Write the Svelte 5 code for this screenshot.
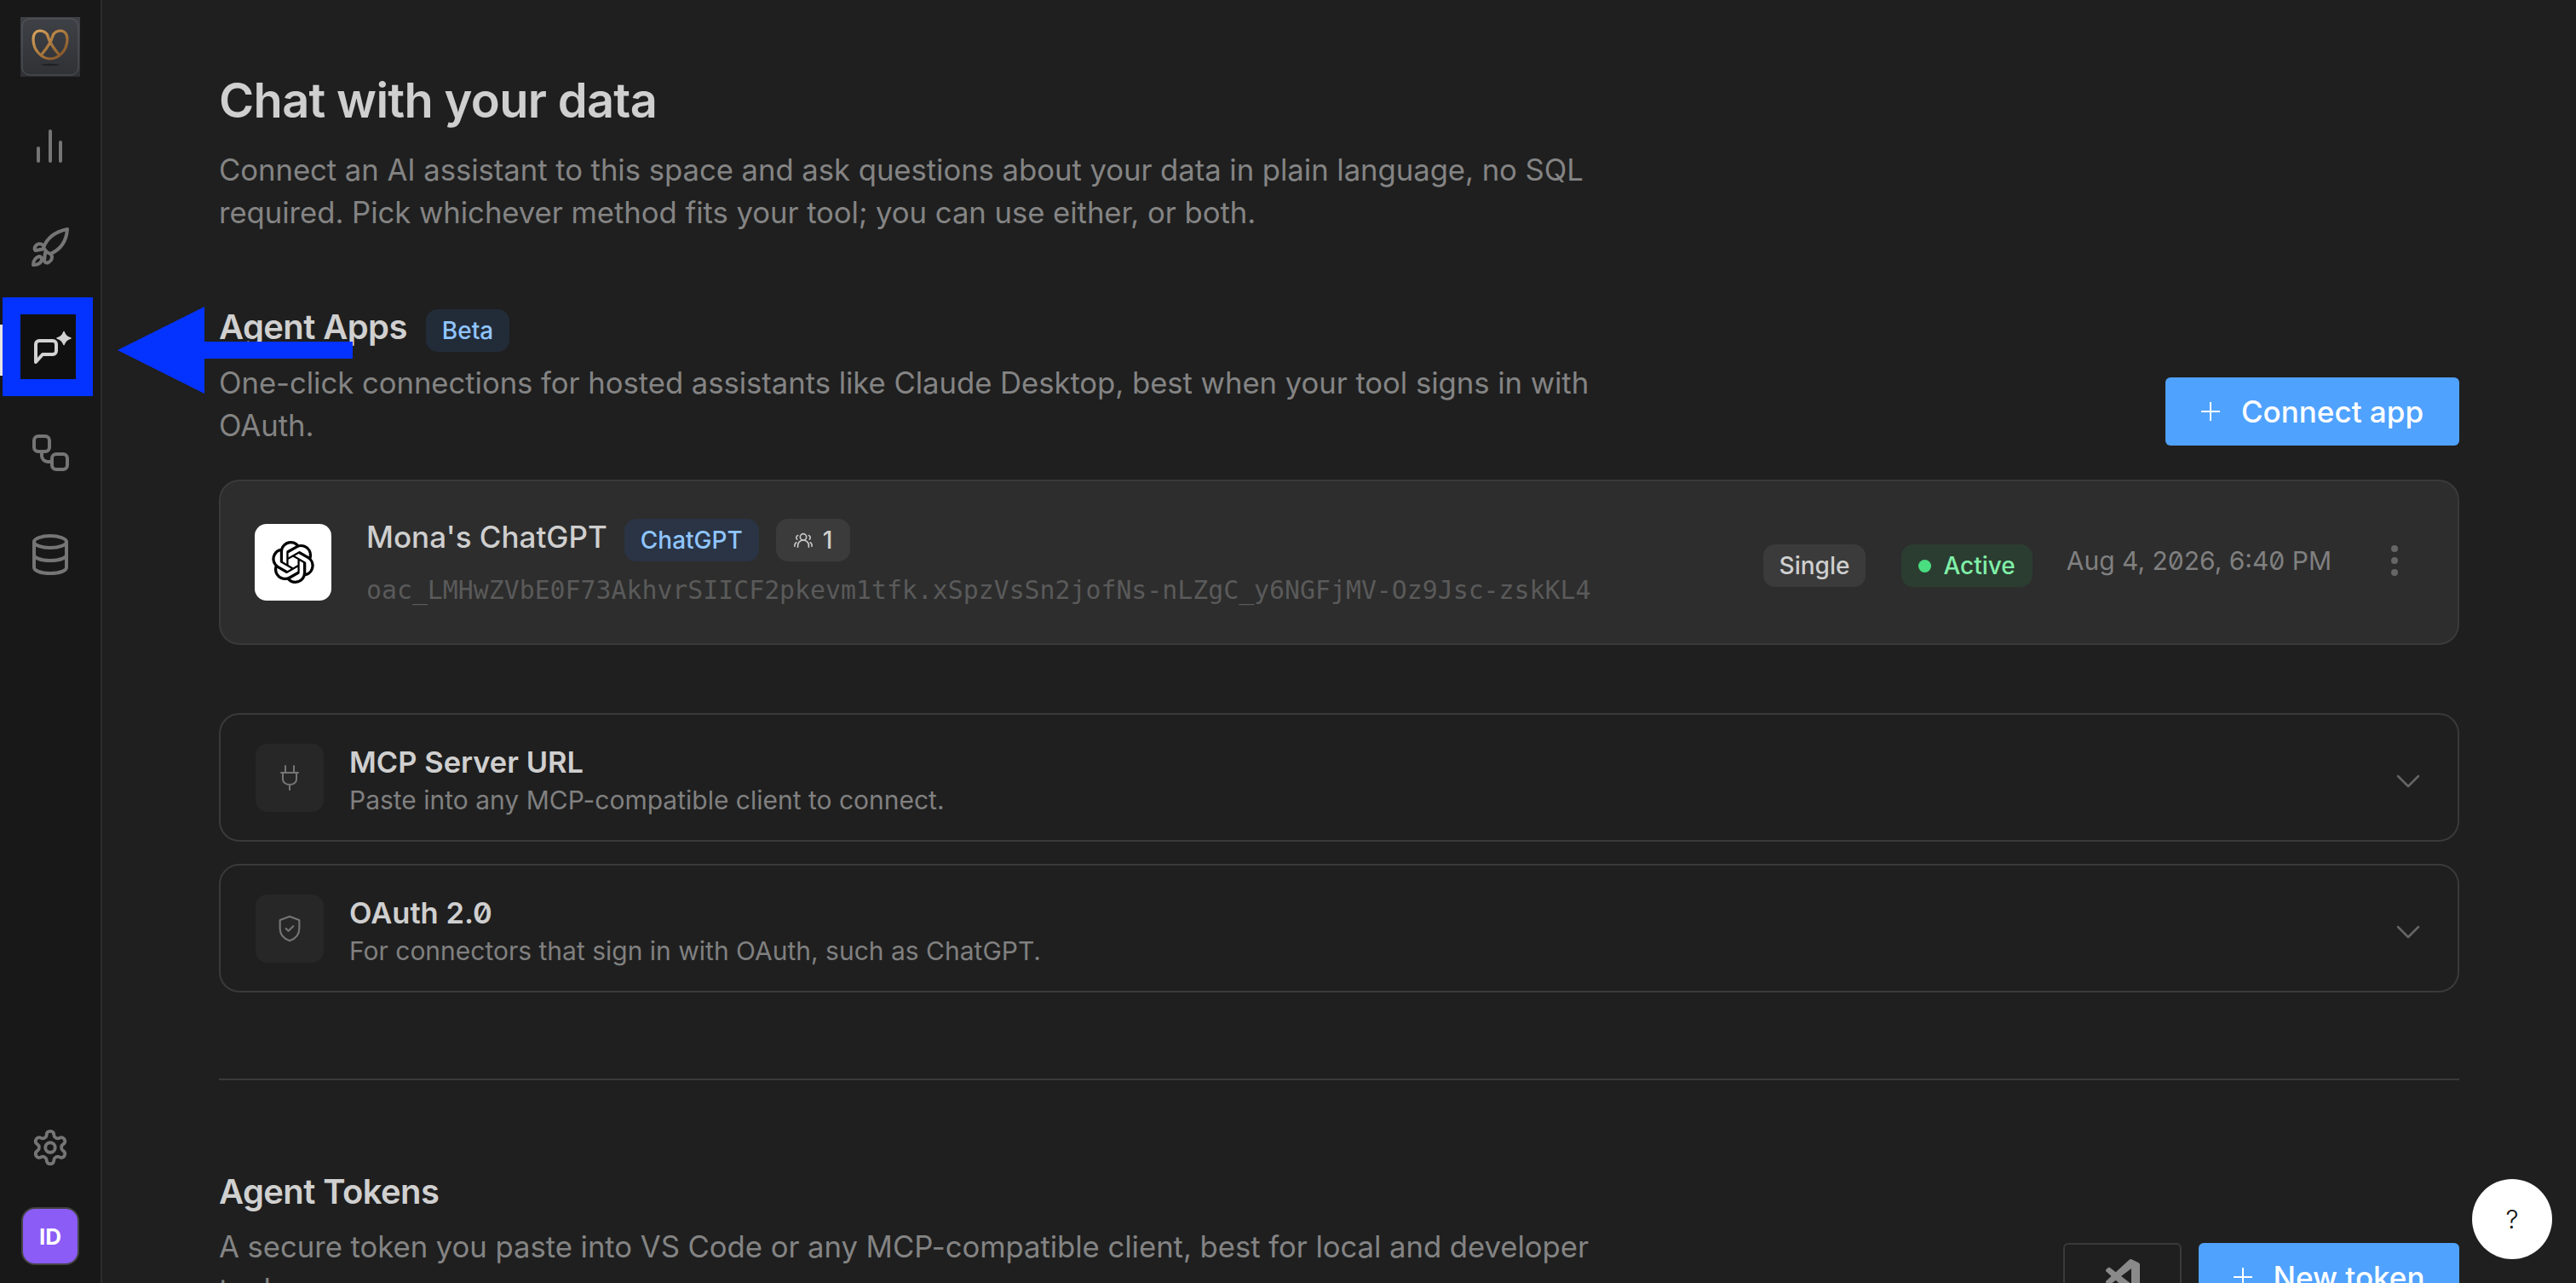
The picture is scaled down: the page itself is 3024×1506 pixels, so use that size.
<script>
  const connectors = [
    { title: 'MCP Server URL', sub: 'Paste into any MCP-compatible client to connect.', icon: 'plug' },
    { title: 'OAuth 2.0', sub: 'For connectors that sign in with OAuth, such as ChatGPT.', icon: 'shield' }
  ];
  const openai = 'M22.2819 9.8211a5.9847 5.9847 0 0 0-.5157-4.9108 6.0462 6.0462 0 0 0-6.5098-2.9A6.0651 6.0651 0 0 0 4.9807 4.1818a5.9847 5.9847 0 0 0-3.9977 2.9 6.0462 6.0462 0 0 0 .7427 7.0966 5.98 5.98 0 0 0 .511 4.9107 6.051 6.051 0 0 0 6.5146 2.9001A5.9847 5.9847 0 0 0 13.2599 24a6.0557 6.0557 0 0 0 5.7718-4.2058 5.9894 5.9894 0 0 0 3.9977-2.9001 6.0557 6.0557 0 0 0-.7475-7.0729zm-9.022 12.6081a4.4755 4.4755 0 0 1-2.8764-1.0408l.1419-.0804 4.7783-2.7582a.7948.7948 0 0 0 .3927-.6813v-6.7369l2.02 1.1686a.071.071 0 0 1 .038.052v5.5826a4.504 4.504 0 0 1-4.4945 4.4944zm-9.6607-4.1254a4.4708 4.4708 0 0 1-.5346-3.0137l.142.0852 4.783 2.7582a.7712.7712 0 0 0 .7806 0l5.8428-3.3685v2.3324a.0804.0804 0 0 1-.0332.0615L9.74 19.9502a4.4992 4.4992 0 0 1-6.1408-1.6464zM2.3408 7.8956a4.485 4.485 0 0 1 2.3655-1.9728V11.6a.7664.7664 0 0 0 .3879.6765l5.8144 3.3543-2.0201 1.1685a.0757.0757 0 0 1-.071 0l-4.8303-2.7865A4.504 4.504 0 0 1 2.3408 7.872zm16.5963 3.8558L13.1038 8.364 15.1192 7.2a.0757.0757 0 0 1 .071 0l4.8303 2.7913a4.4944 4.4944 0 0 1-.6765 8.1042v-5.6772a.79.79 0 0 0-.407-.667zm2.0107-3.0231l-.142-.0852-4.7735-2.7818a.7759.7759 0 0 0-.7854 0L9.409 9.2297V6.8974a.0662.0662 0 0 1 .0284-.0615l4.8303-2.7866a4.4992 4.4992 0 0 1 6.6802 4.66zM8.3065 12.863l-2.02-1.1638a.0804.0804 0 0 1-.038-.0567V6.0742a4.4992 4.4992 0 0 1 7.3757-3.4537l-.142.0805L8.704 5.459a.7948.7948 0 0 0-.3927.6813zm1.0976-2.3654l2.602-1.4998 2.6069 1.4998v2.9994l-2.5974 1.4997-2.6067-1.4997Z';
</script>

<div class="shell">
  <aside class="sidebar">
    <div class="logo">
      <svg viewBox="0 0 70 70" width="70" height="70">
        <defs>
          <linearGradient id="tile" x1="0" y1="0" x2="0" y2="1">
            <stop offset="0" stop-color="#3e4146" />
            <stop offset="1" stop-color="#2f3135" />
          </linearGradient>
          <linearGradient id="gold" x1="0" y1="0" x2="1" y2="1">
            <stop offset="0" stop-color="#d9a45c" />
            <stop offset="1" stop-color="#7c4e22" />
          </linearGradient>
        </defs>
        <rect width="70" height="70" fill="url(#tile)" />
        <rect x="2" y="2" width="66" height="66" rx="9" fill="none" stroke="#6c6e72" stroke-width="0.6" />
        <path d="M24 45C30 38 36 30 38 22C40 15 55 12 55 26C55 40 44 49 35 49C26 49 15 40 15 26C15 12 30 15 32 22C34 30 40 38 46 45" fill="none" stroke="url(#gold)" stroke-width="3.2" stroke-linecap="round" />
        <ellipse cx="35" cy="56" rx="11" ry="1.2" fill="#1f2023" />
      </svg>
    </div>

    <nav class="nav">
      <a class="nav-item" href="#charts" aria-label="Charts">
        <svg viewBox="0 0 40 40" width="40" height="40" class="ico"><path d="M6 23v15M20 3v35M32 16v22" stroke-width="4" /></svg>
      </a>
      <a class="nav-item" href="#launch" aria-label="Launch">
        <svg viewBox="0 0 48 48" width="48" height="48" class="ico">
          <path d="M20 29l-4-5C20 12 30 5 44 2c-1 14-8 24-20 29z" stroke-width="4" />
          <path d="M16 21c-4-3-8-2-10 2-1 2 0 4 1 4l10-2M25 31c2 4 1 8-3 10-3 1-5 0-5-2l1-9M11 34c-4 1-7 5-7 10 5 0 9-2 10-6 0-3-1-4-3-4z" stroke-width="4" />
        </svg>
      </a>
      <a class="nav-item active" href="#chat" aria-label="Chat">
        <svg viewBox="0 0 44 40" width="44" height="40" class="ico chat">
          <path d="M9 9h16a4 4 0 0 1 4 4v8a4 4 0 0 1-4 4H13l-8 9V13a4 4 0 0 1 4-4z" stroke-width="4" />
          <path d="M38-1.500q2 6 8 7.500q-6 1.500-8 7.500q-2-6-8-7.500q6-1.500 8-7.500z" class="solid" stroke-width="1.500" />
        </svg>
      </a>
      <a class="nav-item" href="#flows" aria-label="Flows">
        <svg viewBox="0 0 44 44" width="44" height="44" class="ico">
          <rect x="3" y="3" width="18" height="18" rx="5" stroke-width="4" />
          <rect x="24" y="24" width="18" height="18" rx="5" stroke-width="4" />
          <path d="M12 21v5a7 7 0 0 0 7 7h5" stroke-width="4" />
        </svg>
      </a>
      <a class="nav-item" href="#data" aria-label="Data">
        <svg viewBox="0 0 44 48" width="44" height="48" class="ico">
          <ellipse cx="22" cy="9" rx="19" ry="7" stroke-width="4" />
          <path d="M3 9v30c0 4 8 7 19 7s19-3 19-7V9M3 24c0 4 8 7 19 7s19-3 19-7" stroke-width="4" />
        </svg>
      </a>
    </nav>

    <div class="side-bottom">
      <svg viewBox="0 0 24 24" width="46" height="46" class="ico gear">
        <path d="M12.22 2h-.44a2 2 0 0 0-2 2v.18a2 2 0 0 1-1 1.73l-.43.25a2 2 0 0 1-2 0l-.15-.08a2 2 0 0 0-2.73.73l-.22.38a2 2 0 0 0 .73 2.73l.15.1a2 2 0 0 1 1 1.72v.51a2 2 0 0 1-1 1.74l-.15.09a2 2 0 0 0-.73 2.73l.22.38a2 2 0 0 0 2.73.73l.15-.08a2 2 0 0 1 2 0l.43.25a2 2 0 0 1 1 1.73V20a2 2 0 0 0 2 2h.44a2 2 0 0 0 2-2v-.18a2 2 0 0 1 1-1.73l.43-.25a2 2 0 0 1 2 0l.15.08a2 2 0 0 0 2.73-.73l.22-.39a2 2 0 0 0-.73-2.73l-.15-.08a2 2 0 0 1-1-1.74v-.5a2 2 0 0 1 1-1.74l.15-.09a2 2 0 0 0 .73-2.73l-.22-.38a2 2 0 0 0-2.73-.73l-.15.08a2 2 0 0 1-2 0l-.43-.25a2 2 0 0 1-1-1.73V4a2 2 0 0 0-2-2z" stroke-width="2" />
        <circle cx="12" cy="12" r="3" stroke-width="2" />
      </svg>
      <div class="avatar">ID</div>
    </div>
  </aside>

  <main class="main">
    <h1>Chat with your data</h1>
    <p class="desc intro">Connect an AI assistant to this space and ask questions about your data in plain language, no SQL required. Pick whichever method fits your tool; you can use either, or both.</p>

    <section class="head apps-head">
      <div>
        <div class="head-title">
          <h2>Agent Apps</h2>
          <span class="chip blue beta">Beta</span>
        </div>
        <p class="desc">One-click connections for hosted assistants like Claude Desktop, best when your tool signs in with OAuth.</p>
      </div>
      <button class="btn connect">
        <svg class="plus" viewBox="0 0 22 22" width="22" height="22"><path d="M11 0v22M0 11h22" /></svg>
        Connect app
      </button>
    </section>

    <div class="app-card">
      <div class="app-icon">
        <svg viewBox="0 0 24 24" width="50" height="50"><path d={openai} fill="#000" /></svg>
      </div>
      <div class="app-info">
        <div class="app-line">
          <span class="app-name">Mona's ChatGPT</span>
          <span class="chip blue">ChatGPT</span>
          <span class="chip gray users">
            <svg viewBox="0 0 24 24" width="22" height="22" fill="none" stroke="#c8c8c8" stroke-width="1.8" stroke-linecap="round">
              <circle cx="12" cy="8" r="4" />
              <path d="M5 21v-2a7 7 0 0 1 14 0v2M4 11a3 3 0 0 1 1-5M20 11a3 3 0 0 0-1-5M1 20v-2a5 5 0 0 1 2-3M23 20v-2a5 5 0 0 0-2-3" />
            </svg>
            1
          </span>
        </div>
        <code class="token">oac_LMHwZVbE0F73AkhvrSIICF2pkevm1tfk.xSpzVsSn2jofNs-nLZgC_y6NGFjMV-Oz9Jsc-zskKL4</code>
      </div>
      <div class="app-meta">
        <span class="chip gray single">Single</span>
        <span class="chip green"><i class="dot"></i>Active</span>
        <span class="date">Aug 4, 2026, 6:40 PM</span>
        <span class="kebab"><i></i><i></i><i></i></span>
      </div>
    </div>

    <div class="connectors">
      {#each connectors as c}
        <div class="connector">
          <div class="connector-icon">
            {#if c.icon === 'plug'}
              <svg viewBox="0 0 26 30" width="26" height="30" class="ico">
                <path d="M8 1v8M18 1v8M3 9h20M5 9v8a8 6 0 0 0 16 0V9M13 23v6" stroke-width="2" />
              </svg>
            {:else}
              <svg viewBox="0 0 24 24" width="34" height="34" class="ico">
                <path d="M12 2l8 3v7c0 5-3.500 8.500-8 10-4.500-1.500-8-5-8-10V5z" stroke-width="1.500" />
                <path d="M9 12l2 2 4-4" stroke-width="1.500" />
              </svg>
            {/if}
          </div>
          <div class="connector-text">
            <div class="connector-title">{c.title}</div>
            <div class="connector-sub">{c.sub}</div>
          </div>
          <svg class="chevron" viewBox="0 0 28 16" width="28" height="16"><path d="M2 2l12 12L26 2" /></svg>
        </div>
      {/each}
    </div>

    <hr class="divider" />

    <section class="head tokens-head">
      <div>
        <h2>Agent Tokens</h2>
        <p class="desc">A secure token you paste into VS Code or any MCP-compatible client, best for local and developer tools.</p>
      </div>
      <div class="token-actions">
        <button class="btn-outline" aria-label="VS Code">
          <svg viewBox="0 0 24 24" width="40" height="40"><path fill="#8a8a8a" d="M23.15 2.587L18.21.21a1.494 1.494 0 0 0-1.705.29l-9.46 8.63-4.12-3.128a.999.999 0 0 0-1.276.057L.327 7.261A1 1 0 0 0 .326 8.74L3.899 12 .326 15.26a1 1 0 0 0 .001 1.479L1.65 17.94a.999.999 0 0 0 1.276.057l4.12-3.128 9.46 8.63a1.492 1.492 0 0 0 1.704.29l4.942-2.377A1.5 1.5 0 0 0 24 20.06V3.939a1.5 1.5 0 0 0-.85-1.352zm-5.146 14.861L10.826 12l7.178-5.448v10.896z" /></svg>
        </button>
        <button class="btn newtoken">
          <svg class="plus" viewBox="0 0 22 22" width="22" height="22"><path d="M11 0v22M0 11h22" /></svg>
          New token
        </button>
      </div>
    </section>
  </main>

  <!-- annotation drawn on top of the screenshot -->
  <div class="mark-box"></div>
  <svg class="mark-arrow" viewBox="0 0 276 102" width="276" height="102">
    <path d="M0 51L102 0v41h174v20H102v41z" fill="#0433ff" />
  </svg>
  <button class="help">?</button>
</div>

<style>
  :global(body) {
    margin: 0;
    background: #1f1f1f;
  }

  .shell {
    position: relative;
    display: flex;
    width: 3024px;
    height: 1506px;
    overflow: hidden;
    background: #1f1f1f;
    font-family: Inter, "Liberation Sans", sans-serif;
    font-variant-numeric: slashed-zero;
    color: #cfcfcf;
  }

  /* sidebar */
  .sidebar {
    display: flex;
    flex-direction: column;
    align-items: center;
    flex-shrink: 0;
    width: 118px;
    border-right: 2px solid #2c2c2c;
    background: #181818;
    padding: 20px 0 21px;
    box-sizing: content-box;
    height: 1465px;
  }

  .logo {
    width: 70px;
    height: 70px;
    margin-bottom: 21px;
  }

  .logo svg {
    display: block;
  }

  .nav {
    display: flex;
    flex-direction: column;
    width: 100%;
  }

  .nav-item {
    display: flex;
    align-items: center;
    justify-content: center;
    position: relative;
    height: 120px;
  }

  .nav-item.active::before {
    content: '';
    position: absolute;
    left: 0;
    top: 30px;
    width: 3px;
    height: 60px;
    background: #e5e5e5;
  }

  .nav-item.active::after {
    content: '';
    position: absolute;
    left: 14px;
    top: 8px;
    width: 90px;
    height: 100px;
    background: #101010;
  }

  .ico {
    fill: none;
    stroke: #757575;
    stroke-linecap: round;
    stroke-linejoin: round;
  }

  .active .ico {
    position: relative;
    z-index: 1;
    stroke: #d2d2d2;
  }

  .chat {
    overflow: visible;
  }

  .active .solid {
    fill: #d2d2d2;
  }

  .side-bottom {
    margin-top: auto;
    display: flex;
    flex-direction: column;
    align-items: center;
    gap: 47px;
  }

  .gear {
    display: block;
  }

  .avatar {
    display: flex;
    align-items: center;
    justify-content: center;
    width: 64px;
    height: 64px;
    border: 2px solid #444;
    border-radius: 16px;
    background: #8b5cf6;
    color: #fff;
    font-size: 26px;
    font-weight: 700;
  }

  /* main */
  .main {
    flex: 1;
    min-width: 0;
    padding: 0 137px;
  }

  h1 {
    margin: 80px 0 0;
    font-size: 56px;
    line-height: 76px;
    font-weight: 600;
    letter-spacing: -0.7px;
    color: #cfcfcf;
  }

  h2 {
    margin: 0;
    font-size: 40px;
    line-height: 50px;
    font-weight: 600;
    letter-spacing: -0.6px;
    color: #d0d0d0;
  }

  .desc {
    margin: 0;
    max-width: 1660px;
    font-size: 34.7px;
    line-height: 50px;
    color: #848484;
    letter-spacing: -0.05px;
  }

  .intro {
    margin-top: 18px;
  }

  .head {
    display: flex;
    justify-content: space-between;
  }

  .apps-head {
    margin-top: 89px;
    height: 200px;
  }

  .head-title {
    display: flex;
    align-items: center;
    gap: 22px;
    height: 50px;
    margin-bottom: 11px;
  }

  .head-title h2 {
    padding-bottom: 8px;
  }

  .chip {
    display: inline-flex;
    align-items: center;
    height: 50px;
    box-sizing: border-box;
    border-radius: 14px;
    padding: 0 20px;
    font-size: 28px;
    font-weight: 500;
  }

  .chip.blue {
    background: #2a3444;
    color: #90c5ff;
    padding: 0 19px;
  }

  .chip.beta {
    background: #222c39;
  }

  .chip.gray {
    background: #3b3b3b;
    color: #cfcfcf;
  }

  .chip.green {
    background: #2b3d31;
    color: #80efa8;
    gap: 14px;
    padding: 0 20px;
  }

  .dot {
    width: 15px;
    height: 15px;
    border-radius: 50%;
    background: #4ade80;
  }

  .btn {
    display: flex;
    align-items: center;
    justify-content: center;
    gap: 25px;
    height: 80px;
    border: none;
    border-radius: 6px;
    background: #50a2ff;
    color: #fff;
    font-family: inherit;
    font-size: 35px;
    font-weight: 500;
  }

  .connect {
    width: 345px;
    margin-top: 80px;
    flex-shrink: 0;
  }

  .plus {
    fill: none;
    stroke: #fff;
    stroke-width: 2;
  }

  .app-card {
    display: flex;
    align-items: center;
    box-sizing: border-box;
    height: 194px;
    padding: 0 40px;
    border: 2px solid #3a3a3a;
    border-radius: 24px;
    background: #2d2d2d;
  }

  .app-icon {
    display: flex;
    align-items: center;
    justify-content: center;
    flex-shrink: 0;
    width: 90px;
    height: 90px;
    border-radius: 14px;
    background: #fff;
    margin-right: 41px;
  }

  .app-info {
    flex: 1;
    display: flex;
    flex-direction: column;
    gap: 16px;
  }

  .app-line {
    display: flex;
    align-items: center;
    gap: 20px;
  }

  .app-name {
    font-size: 35px;
    font-weight: 500;
    color: #cfcfcf;
    padding-bottom: 8px;
  }

  .chip.users {
    gap: 12px;
    padding: 0 21px;
  }

  .token {
    font-family: "DejaVu Sans Mono", "Liberation Mono", monospace;
    font-size: 29.85px;
    line-height: 36px;
    color: #5a5a5a;
    white-space: nowrap;
  }

  .app-meta {
    display: flex;
    align-items: center;
    padding-top: 8px;
  }

  .chip.single {
    margin-right: 42px;
    padding: 0 19px;
  }

  .date {
    margin: 0 70px 12px 40px;
    font-size: 30px;
    color: #808080;
  }

  .kebab {
    display: flex;
    flex-direction: column;
    gap: 6px;
    margin: 0 30px 12px 0;
  }

  .kebab i {
    width: 8px;
    height: 8px;
    border-radius: 50%;
    background: #666;
  }

  .connectors {
    display: flex;
    flex-direction: column;
    gap: 26px;
    margin-top: 80px;
  }

  .connector {
    display: flex;
    align-items: center;
    box-sizing: border-box;
    height: 151px;
    padding: 0 44px 0 41px;
    border: 2px solid #3a3a3a;
    border-radius: 24px;
  }

  .connector-icon {
    display: flex;
    align-items: center;
    justify-content: center;
    width: 80px;
    height: 80px;
    border-radius: 14px;
    background: #272727;
    margin-right: 30px;
  }

  .connector-text {
    flex: 1;
    padding-top: 8px;
  }

  .connector-title {
    font-size: 34.500px;
    line-height: 44px;
    font-weight: 600;
    color: #cfcfcf;
  }

  .connector-sub {
    font-size: 30px;
    line-height: 44px;
    color: #808080;
  }

  .chevron {
    margin-top: 8px;
    fill: none;
    stroke: #666;
    stroke-width: 2.5;
    stroke-linecap: round;
    stroke-linejoin: round;
  }

  .divider {
    margin: 101px 0 0;
    border: none;
    height: 2px;
    background: #3a3a3a;
  }

  .tokens-head {
    margin-top: 106px;
  }

  .tokens-head .desc {
    margin-top: 14px;
  }

  .token-actions {
    display: flex;
    gap: 20px;
    margin-top: 85px;
    flex-shrink: 0;
  }

  .btn-outline {
    width: 139px;
    height: 80px;
    box-sizing: border-box;
    border: 2px solid #3a3a3a;
    border-radius: 6px;
    background: transparent;
    padding: 0;
  }

  .newtoken {
    width: 306px;
  }

  /* annotation */
  .mark-box {
    position: absolute;
    left: 3px;
    top: 349px;
    width: 106px;
    height: 116px;
    box-sizing: border-box;
    border: solid #0433ff;
    border-width: 20px 20px 20px 21px;
  }

  .mark-arrow {
    position: absolute;
    left: 138px;
    top: 360px;
  }

  .help {
    position: absolute;
    left: 2902px;
    top: 1384px;
    width: 94px;
    height: 94px;
    border: none;
    border-radius: 50%;
    background: #fff;
    color: #111;
    font-family: inherit;
    font-size: 30px;
    font-weight: 300;
  }
</style>
